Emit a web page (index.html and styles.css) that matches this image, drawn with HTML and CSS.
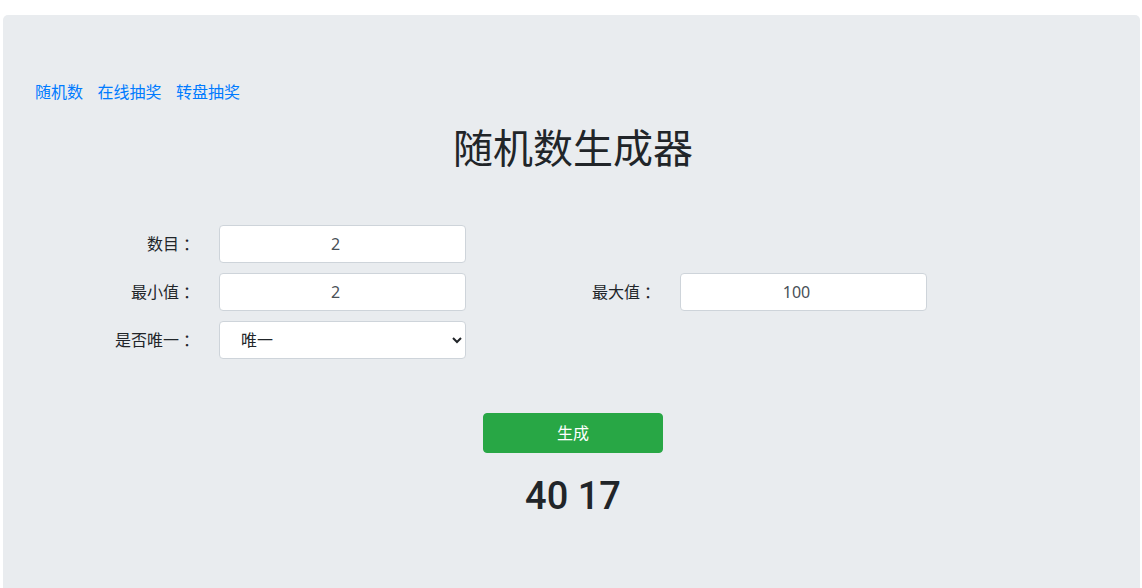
FILE: index.html
```html
<!DOCTYPE html>
<html lang="zh-CN">
<head>
<meta charset="utf-8">
<title>随机数生成器</title>
<link rel="stylesheet" href="styles.css">
</head>
<body>
<div class="jumbotron">
  <nav class="links">
    <a href="#">随机数</a>
    <a href="#">在线抽奖</a>
    <a href="#">转盘抽奖</a>
  </nav>
  <h1 class="title">随机数生成器</h1>
  <form class="form">
    <label class="lbl">数目<span class="colon">：</span></label>
    <input class="field" type="text" value="2">
    <span></span><span></span>
    <label class="lbl">最小值<span class="colon">：</span></label>
    <input class="field" type="text" value="2">
    <label class="lbl">最大值<span class="colon">：</span></label>
    <input class="field" type="text" value="100">
    <label class="lbl">是否唯一<span class="colon">：</span></label>
    <select class="field sel">
      <option>唯一</option>
      <option>不唯一</option>
    </select>
  </form>
  <div class="actions">
    <button class="btn" type="button">生成</button>
  </div>
  <div class="result">40 17</div>
</div>
</body>
</html>
```
FILE: styles.css
```css
html, body {
  margin: 0;
  padding: 0;
  background: #fff;
}
body {
  font-family: "Noto Sans", "Noto Sans CJK SC", sans-serif;
  font-size: 16px;
  line-height: 1.5;
  color: #212529;
  text-spacing-trim: space-all;
}
.jumbotron {
  margin: 15px 2px 0 3px;
  padding: 65px 29px 68px 32px;
  background: #e9ecef;
  border-radius: 5px 5px 0 0;
}
.links {
  display: flex;
  gap: 14.5px;
  height: 24px;
}
.links a {
  color: #007bff;
  text-decoration: none;
  line-height: 24px;
}
.title {
  margin: 20px 0 0;
  text-align: center;
  font-size: 40px;
  line-height: 48px;
  font-weight: 400;
  color: #212529;
}
.form {
  margin-top: 53px;
  display: grid;
  grid-template-columns: 160px 247px 166px 247px;
  grid-auto-rows: 38px;
  column-gap: 24px;
  row-gap: 10px;
}
.lbl {
  display: flex;
  align-items: center;
  justify-content: flex-end;
  color: #212529;
}
.colon {
  font-family: "Noto Sans CJK JP", "Noto Sans CJK SC", sans-serif;
  display: inline-block;
  width: 16px;
  text-align: center;
}
.field {
  box-sizing: border-box;
  width: 100%;
  height: 38px;
  border: 1px solid #ced4da;
  border-radius: 4px;
  background: #fff;
  font-family: "Noto Sans", "Noto Sans CJK SC", sans-serif;
  font-size: 16px;
  color: #495057;
  text-align: center;
  padding: 6px 26px 6px 12px;
  outline: none;
}
.sel {
  text-align: left;
  padding: 6px 6px 6px 17px;
  color: #212529;
}
.actions {
  margin-top: 54px;
  display: flex;
  justify-content: center;
}
.btn {
  width: 180px;
  height: 40px;
  background: #28a745;
  border: 1px solid #28a745;
  border-radius: 4px;
  color: #fff;
  font-family: "Noto Sans", "Noto Sans CJK SC", sans-serif;
  font-size: 16px;
  line-height: 24px;
  padding: 7px 12px;
  cursor: pointer;
}
.result {
  margin-top: 19px;
  text-align: center;
  font-family: Roboto, "Noto Sans", sans-serif;
  font-size: 38px;
  line-height: 48px;
  font-weight: 500;
  color: #212529;
}
```
